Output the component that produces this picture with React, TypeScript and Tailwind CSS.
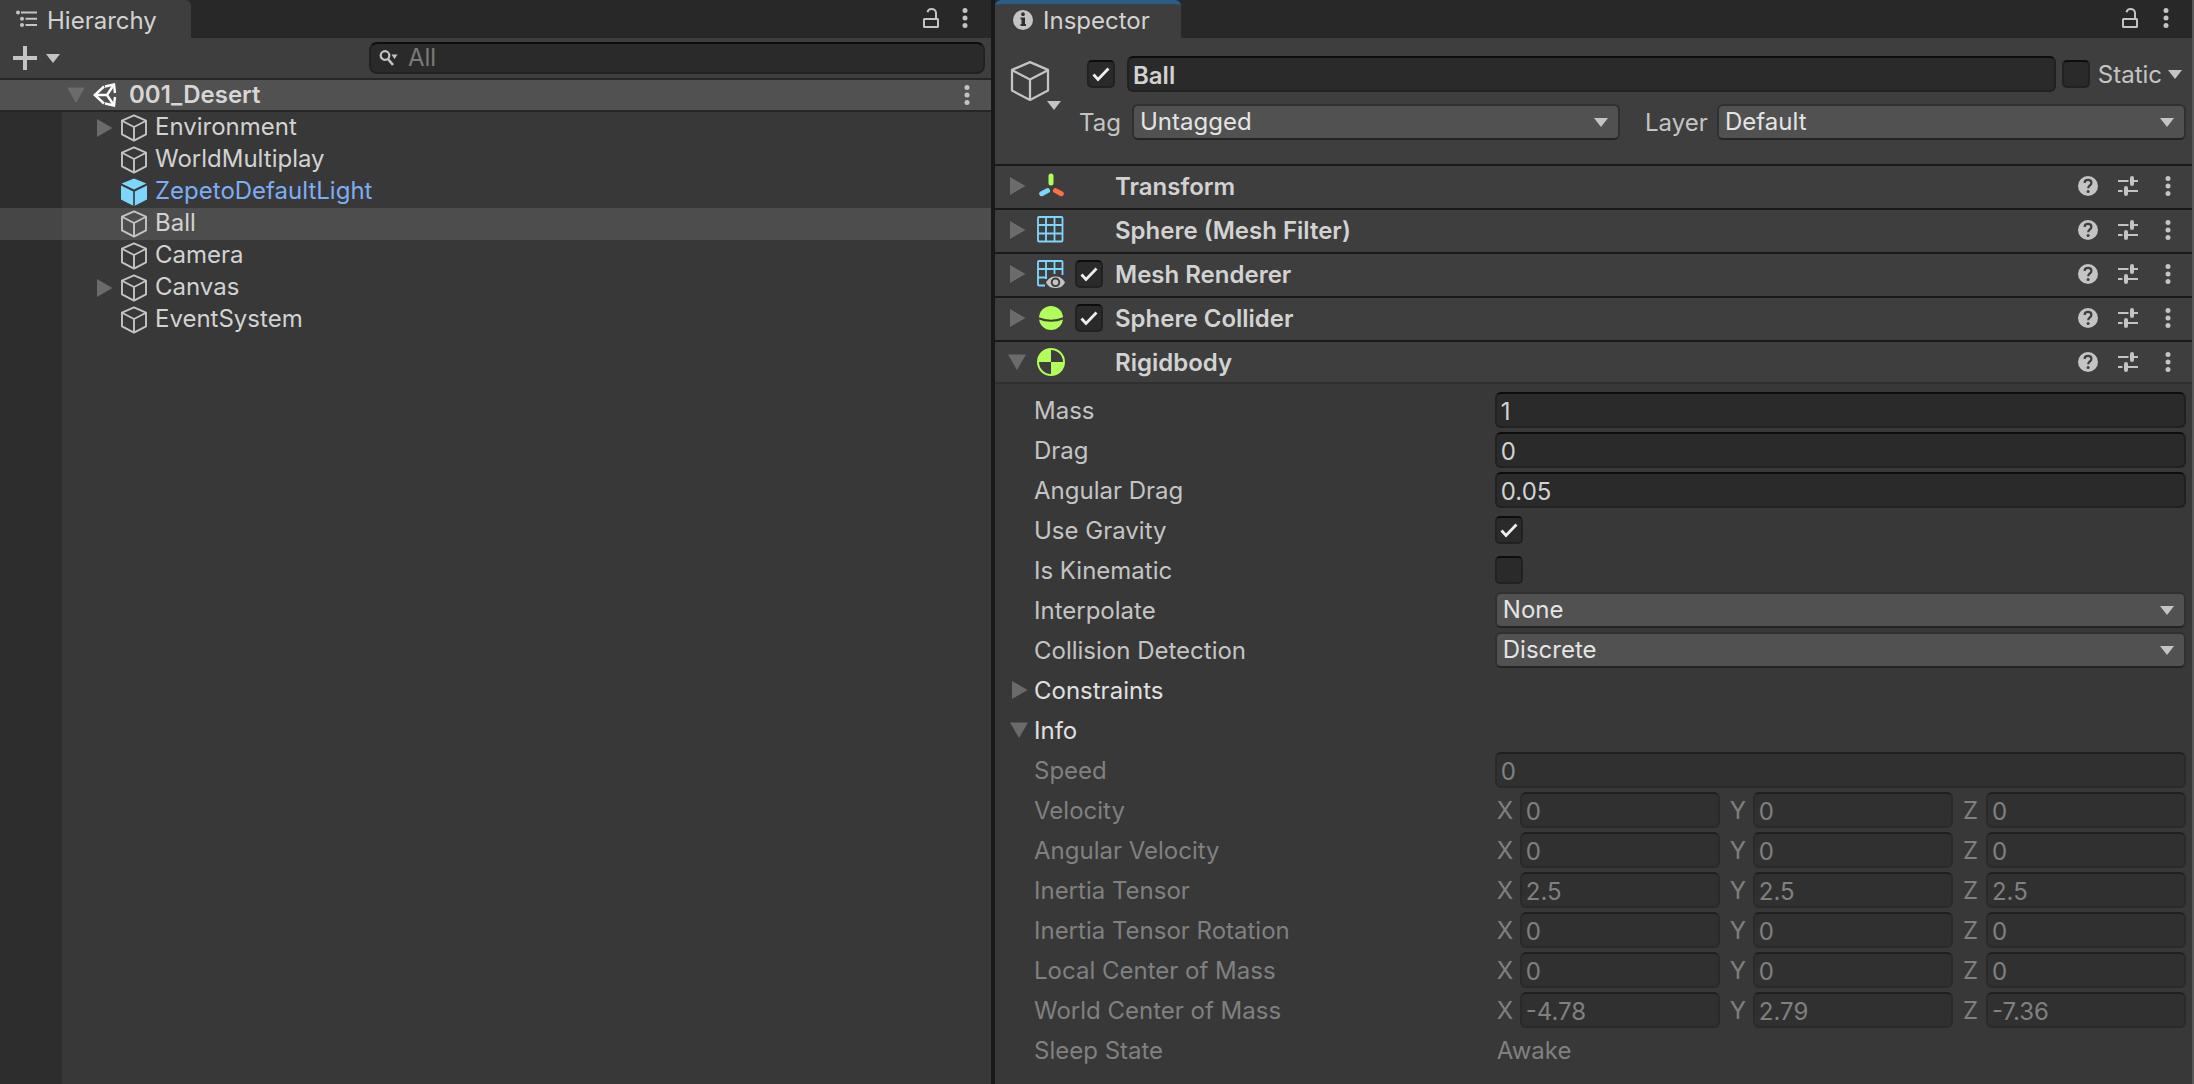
import type { ReactNode } from "react";

const Cube = ({ className = "w-7 h-7", strokeWidth = 1.9 }: { className?: string; strokeWidth?: number }) => (
  <svg viewBox="0 0 28 28" className={className} fill="none" stroke="#c4c4c4" strokeWidth={strokeWidth} strokeLinejoin="round" strokeLinecap="round">
    <path d="M14 1.4 26 6.6V20.4L14 26.6 2 20.4V6.6Z" />
    <path d="M2.4 7 14 13 25.6 7M14 13V26" />
  </svg>
);

const PrefabCube = () => (
  <svg viewBox="0 0 28 28" className="h-7 w-7" fill="#7fd6fd">
    <path d="M14 .4 26.4 5.6 14 11.6 1.6 5.6Z" />
    <path d="M1 7.6 13.2 13.4V27.8L1 21.6Z" />
    <path d="M27 7.6 14.8 13.4V27.8L27 21.6Z" />
  </svg>
);

const Foldout = ({ open = false }: { open?: boolean }) => (
  <svg viewBox="0 0 18 18" className="h-[18px] w-[18px] shrink-0" fill="#6b6b6b">
    {open ? <path d="M0 1.5H18L9 17Z" /> : <path d="M2 0V18L17.5 9Z" />}
  </svg>
);

const Caret = ({ className = "" }: { className?: string }) => (
  <svg viewBox="0 0 14 9" className={`h-[9px] w-3.5 shrink-0 ${className}`} fill="#c4c4c4">
    <path d="M0 0H14L7 9Z" />
  </svg>
);

const Dots = () => (
  <svg viewBox="0 0 20 20" className="h-5 w-5" fill="#c4c4c4">
    <circle cx="10" cy="2.5" r="2.5" />
    <circle cx="10" cy="10" r="2.5" />
    <circle cx="10" cy="17.5" r="2.5" />
  </svg>
);

const Lock = () => (
  <svg viewBox="0 0 20 20" className="h-5 w-5" fill="none" stroke="#c4c4c4" strokeWidth="2">
    <rect x="3" y="11" width="14" height="8" rx=".5" />
    <path d="M6.5 4.2C7 2 8.3 1 10.5 1 13 1 15 2.6 15 5V11" />
  </svg>
);

const Help = () => (
  <svg viewBox="0 0 20 20" className="h-5 w-5">
    <circle cx="10" cy="10" r="10" fill="#c4c4c4" />
    <path d="M6.6 7C6.6 5 8 3.9 10 3.9 12 3.9 13.4 5.1 13.4 6.9 13.4 9.3 10.2 9.4 10.2 12.3" fill="none" stroke="#3e3e3e" strokeWidth="2.2" />
    <circle cx="10.1" cy="15.6" r="1.5" fill="#3e3e3e" />
  </svg>
);

const Preset = () => (
  <svg viewBox="0 0 20 20" className="h-5 w-5" stroke="#c4c4c4" strokeWidth="2" fill="none">
    <path d="M0 5H10.5M14 5H20M0 15H4.5M8 15H20" />
    <path d="M14 2V8M8 12V18" strokeWidth="4" strokeLinecap="round" />
  </svg>
);

const TransformIcon = () => (
  <svg viewBox="0 0 28 28" className="h-7 w-7" fill="none" strokeWidth="5" strokeLinecap="round">
    <path d="M14 4V11" stroke="#b1fd59" />
    <path d="M10.5 18.6 4.7 21.7" stroke="#7fd6fd" />
    <path d="M18.5 18.6 24.3 21.7" stroke="#ff7043" />
  </svg>
);

const MeshIcon = () => (
  <svg viewBox="0 0 28 28" className="h-7 w-7" fill="none" stroke="#7fd6fd" strokeWidth="1.8">
    <rect x="1" y="1" width="24.5" height="24.5" rx="1" />
    <path d="M9 1V25M17.5 1V25M1 9H25M1 17.5H25" />
  </svg>
);

const RendererIcon = () => (
  <svg viewBox="0 0 28 28" className="h-7 w-7" fill="none" stroke="#7fd6fd" strokeWidth="1.8">
    <path d="M8 25.5H2Q1 25.5 1 24.5V2Q1 1 2 1H24.5Q25.5 1 25.5 2V15" />
    <path d="M9 1V19M17.5 1V14M1 9H25M1 17.5H10" />
    <path d="M9 22.5C12 17.5 15 16.5 18.5 16.5S25 17.5 28 22.5C25 27.5 22 28 18.5 28S12 27.5 9 22.5Z" fill="#c4c4c4" stroke="none" />
    <circle cx="18.5" cy="22.3" r="3.8" fill="#c4c4c4" stroke="#3e3e3e" strokeWidth="2" />
  </svg>
);

const ColliderIcon = () => (
  <svg viewBox="0 0 28 28" className="h-7 w-7">
    <circle cx="14" cy="14" r="12" fill="#b1fd59" />
    <path d="M1.5 14.2Q14 19.2 26.5 14.2" fill="none" stroke="#3e3e3e" strokeWidth="2" />
  </svg>
);

const RigidbodyIcon = () => (
  <svg viewBox="0 0 28 28" className="h-7 w-7">
    <circle cx="14" cy="14" r="13" fill="none" stroke="#b1fd59" strokeWidth="2" />
    <path d="M14 14V1A13 13 0 0 0 1 14ZM14 14V27A13 13 0 0 0 27 14Z" fill="#b1fd59" />
  </svg>
);

const UnityLogo = () => (
  <svg viewBox="0 0 24 24" className="h-6 w-6" fill="none" stroke="#fff" strokeWidth="2.4">
    <path d="M11 3.5 1.8 12 11 20.5M1.8 12H14M14 12 21 1.5M14 12 21 22.5" />
    <path d="M12 3.5 21 1.5 22 10M12 20.5 21 22.5 22 14" />
  </svg>
);

const IconButton = ({ label, children }: { label: string; children: ReactNode }) => (
  <button type="button" aria-label={label} className="shrink-0">
    {children}
  </button>
);

const Check = ({ id, label, checked = false }: { id?: string; label?: string; checked?: boolean }) => (
  <span className="grid h-7 w-7 shrink-0">
    <input
      type="checkbox"
      id={id}
      aria-label={label}
      defaultChecked={checked}
      className="peer col-start-1 row-start-1 h-7 w-7 appearance-none rounded-[5px] border-2 border-[#212121] border-t-[#0d0d0d] bg-[#2a2a2a]"
    />
    <svg viewBox="0 0 28 28" className="pointer-events-none col-start-1 row-start-1 hidden h-7 w-7 peer-checked:block" fill="none" stroke="#eee" strokeWidth="2.8">
      <path d="M6.5 14.5 11 19.5 21.5 8.5" />
    </svg>
  </span>
);

const Field = ({ id, label, value, bold = false, disabled = false }: { id?: string; label?: string; value: string; bold?: boolean; disabled?: boolean }) => (
  <input
    type="text"
    id={id}
    aria-label={label}
    defaultValue={value}
    disabled={disabled}
    className={`h-9 w-full min-w-0 flex-1 rounded-md border-2 border-[#212121] border-t-[#0d0d0d] bg-[#2a2a2a] px-1 pt-0.5 text-[#d2d2d2] disabled:border-[#2a2a2a] disabled:border-t-[#1f1f1f] disabled:bg-[#303030] disabled:text-[#808080] ${bold ? "font-semibold" : ""}`}
  />
);

const Dropdown = ({ id, value, options }: { id: string; value: string; options: string[] }) => (
  <span className="grid min-w-0 flex-1 items-center">
    <select
      id={id}
      defaultValue={value}
      className="col-start-1 row-start-1 h-9 w-full appearance-none rounded-md border-2 border-[#303030] border-b-[#242424] bg-[#515151] px-1.5 pb-0.5 text-[#e4e4e4]"
    >
      {options.map((o) => (
        <option key={o}>{o}</option>
      ))}
    </select>
    <Caret className="pointer-events-none col-start-1 row-start-1 mr-3 justify-self-end" />
  </span>
);

/* one line of the component body: label on the left, control on the right */
const Row = ({ label, htmlFor, dim = false, children }: { label: string; htmlFor?: string; dim?: boolean; children: ReactNode }) => (
  <div className={`flex h-9 items-center pr-1.5 pl-[39px] ${dim ? "text-[#808080]" : "text-[#c4c4c4]"}`}>
    {htmlFor ? (
      <label htmlFor={htmlFor} className="w-2/5 shrink-0 pt-0.5">{label}</label>
    ) : (
      <span className="w-2/5 shrink-0 pt-0.5">{label}</span>
    )}
    {children}
  </div>
);

const FoldRow = ({ label, open = false }: { label: string; open?: boolean }) => (
  <button type="button" aria-expanded={open} className="flex h-9 items-center gap-1.5 pl-[15px] text-[#e0e0e0]">
    <Foldout open={open} />
    <span className="pt-0.5">{label}</span>
  </button>
);

const vectors = [
  { label: "Velocity", values: ["0", "0", "0"] },
  { label: "Angular Velocity", values: ["0", "0", "0"] },
  { label: "Inertia Tensor", values: ["2.5", "2.5", "2.5"] },
  { label: "Inertia Tensor Rotation", values: ["0", "0", "0"] },
  { label: "Local Center of Mass", values: ["0", "0", "0"] },
  { label: "World Center of Mass", values: ["-4.78", "2.79", "-7.36"] },
];

const VectorRow = ({ label, values }: { label: string; values: string[] }) => (
  <Row label={label} dim>
    <div className="flex flex-1 gap-2.5 pl-0.5">
      {["X", "Y", "Z"].map((axis, i) => (
        <label key={axis} className="flex min-w-0 flex-1 items-center">
          <span className="w-[23px] shrink-0 pt-0.5">{axis}</span>
          <Field value={values[i]} label={`${label} ${axis}`} disabled />
        </label>
      ))}
    </div>
  </Row>
);

const components = [
  { name: "Transform", icon: <TransformIcon /> },
  { name: "Sphere (Mesh Filter)", icon: <MeshIcon /> },
  { name: "Mesh Renderer", icon: <RendererIcon />, toggle: true },
  { name: "Sphere Collider", icon: <ColliderIcon />, toggle: true },
  { name: "Rigidbody", icon: <RigidbodyIcon />, open: true },
];

const ComponentHeader = ({ name, icon, toggle, open }: { name: string; icon: ReactNode; toggle?: boolean; open?: boolean }) => (
  <div className={`flex h-11 items-center border-t-2 border-[#1a1a1a] bg-[#3e3e3e] pr-3.5 pb-0.5 pl-[13px] ${open ? "shadow-[inset_0_-2px_0_#303030]" : ""}`}>
    <button type="button" aria-label={`Toggle ${name}`} aria-expanded={!!open}>
      <Foldout open={open} />
    </button>
    <span className="ml-[11px]">{icon}</span>
    <span className="ml-2.5 w-10">{toggle && <Check label={`Enable ${name}`} checked />}</span>
    <h2 className="pt-0.5 font-semibold text-[#d2d2d2]">{name}</h2>
    <div className="ml-auto flex gap-5">
      <IconButton label="Help"><Help /></IconButton>
      <IconButton label="Presets"><Preset /></IconButton>
      <IconButton label="More"><Dots /></IconButton>
    </div>
  </div>
);

const objects = [
  { name: "Environment", children: true },
  { name: "WorldMultiplay" },
  { name: "ZepetoDefaultLight", prefab: true },
  { name: "Ball", selected: true },
  { name: "Camera" },
  { name: "Canvas", children: true },
  { name: "EventSystem" },
];

const Hierarchy = () => (
  <section className="flex min-w-0 flex-[991] flex-col bg-[#383838]">
    <div className="flex h-[38px] items-stretch bg-[#282828]">
      <button type="button" className="flex w-[191px] items-center gap-[9px] rounded-tr-md bg-[#3e3e3e] pl-4 text-[#d2d2d2]">
        <svg viewBox="0 0 22 18" className="h-[18px] w-[22px]" fill="#c4c4c4">
          <circle cx="2" cy="2.5" r="2" />
          <circle cx="6" cy="8.8" r="2" />
          <circle cx="6" cy="15" r="2" />
          <path d="M5 1.5H21V3.5H5ZM9.5 7.8H21V9.8H9.5ZM9.5 14H21V16H9.5Z" />
        </svg>
        <span className="pt-1">Hierarchy</span>
      </button>
      <div className="ml-auto flex items-center gap-3.5 pr-4 pb-0.5">
        <IconButton label="Lock"><Lock /></IconButton>
        <IconButton label="Menu"><Dots /></IconButton>
      </div>
    </div>

    {/* toolbar */}
    <div className="flex h-10 items-center bg-[#3e3e3e] pr-1.5 pl-[13px]">
      <button type="button" aria-label="Create" className="flex items-center gap-[9px]">
        <svg viewBox="0 0 24 24" className="h-6 w-6" stroke="#c4c4c4" strokeWidth="4">
          <path d="M12 0V24M0 12H24" />
        </svg>
        <Caret />
      </button>
      <label className="ml-[309px] flex h-8 flex-1 items-center gap-[9px] rounded-lg border-2 border-[#212121] border-t-[#0d0d0d] bg-[#2a2a2a] pl-2">
        <svg viewBox="0 0 20 18" className="h-[18px] w-5 shrink-0" fill="none" stroke="#c4c4c4" strokeWidth="2.2">
          <circle cx="6" cy="6.5" r="4.3" />
          <path d="M9 10 14 16" strokeWidth="2.6" />
          <path d="M12.5 5.5H18.5L15.5 10Z" fill="#c4c4c4" stroke="none" />
        </svg>
        <input type="text" aria-label="Search" placeholder="All" className="min-w-0 flex-1 bg-transparent leading-7 placeholder:text-[#7a7a7a]" />
      </label>
    </div>

    {/* scene header */}
    <div className="flex h-[34px] items-center border-y-2 border-[#262626] bg-[#515151] pr-3.5 pl-[67px]">
      <Foldout open />
      <span className="ml-2"><UnityLogo /></span>
      <span className="ml-3 font-semibold text-[#d6d6d6]">001_Desert</span>
      <span className="ml-auto flex">
        <IconButton label="Scene menu"><Dots /></IconButton>
      </span>
    </div>

    <ul className="flex-1 bg-linear-to-r from-[#2d2d2d] from-[62px] to-[#383838] to-[62px]">
      {objects.map((o) => (
        <li key={o.name} className={`flex h-8 items-center pl-[95px] ${o.selected ? "bg-linear-to-r from-[#464646] from-[62px] to-[#4d4d4d] to-[62px]" : ""}`}>
          <span className="w-[25px]">{o.children && <Foldout />}</span>
          {o.prefab ? <PrefabCube /> : <Cube />}
          <span className={`ml-[7px] pb-0.5 ${o.prefab ? "text-[#7dadf3]" : "text-[#d2d2d2]"}`}>{o.name}</span>
        </li>
      ))}
    </ul>
  </section>
);

const Inspector = () => (
  <section className="min-w-0 flex-[1197] border-r-2 border-[#585858] bg-[#383838]">
    <div className="flex h-[38px] items-stretch bg-[#282828]">
      <button type="button" className="flex w-[186px] items-center gap-2.5 rounded-t-md border-t-4 border-[#2c5d87] bg-[#3e3e3e] pb-0.5 pl-[18px] text-[#d2d2d2]">
        <svg viewBox="0 0 20 20" className="h-5 w-5">
          <circle cx="10" cy="10" r="10" fill="#c4c4c4" />
          <path d="M10 2.3A1.9 1.9 0 1 1 9.99 2.3ZM7.5 7.5H12V14H13V16H7.5V14H8.5V9.5H7.5Z" fill="#303030" />
        </svg>
        <span className="pt-0.5">Inspector</span>
      </button>
      <div className="ml-auto flex items-center gap-4 pr-4 pb-0.5">
        <IconButton label="Lock"><Lock /></IconButton>
        <IconButton label="Menu"><Dots /></IconButton>
      </div>
    </div>

    {/* object header */}
    <div className="flex h-[126px] bg-[#3e3e3e] pt-[18px] pr-1.5 pl-3.5 text-[#c4c4c4]">
      <button type="button" aria-label="Change icon" className="flex h-[54px] w-[54px] shrink-0 items-end pt-1">
        <Cube className="-mr-1 h-[42px] w-[42px] shrink-0 self-start" strokeWidth={1.5} />
        <Caret />
      </button>
      <div className="flex min-w-0 flex-1 flex-col gap-3">
        <div className="flex items-center pl-6">
          <Check label="Active" checked />
          <span className="ml-3 flex min-w-0 flex-1"><Field label="Name" value="Ball" bold /></span>
          <span className="ml-1.5 flex"><Check id="static" /></span>
          <label htmlFor="static" className="ml-2 pt-0.5">Static</label>
          <button type="button" aria-label="Static flags" className="mr-1 ml-1.5"><Caret /></button>
        </div>
        <div className="flex items-center pl-4">
          <label htmlFor="tag" className="w-[53px] pt-0.5">Tag</label>
          <div className="flex min-w-0 flex-[488]">
            <Dropdown id="tag" value="Untagged" options={["Untagged", "Respawn", "Finish", "Player"]} />
          </div>
          <label htmlFor="layer" className="ml-[25px] w-[72px] pt-0.5">Layer</label>
          <div className="flex min-w-0 flex-[469]">
            <Dropdown id="layer" value="Default" options={["Default", "TransparentFX", "Water", "UI"]} />
          </div>
        </div>
      </div>
    </div>

    {components.map((c) => (
      <ComponentHeader key={c.name} {...c} />
    ))}

    {/* rigidbody properties */}
    <div className="flex flex-col gap-1 py-2">
      <Row label="Mass" htmlFor="mass"><Field id="mass" value="1" /></Row>
      <Row label="Drag" htmlFor="drag"><Field id="drag" value="0" /></Row>
      <Row label="Angular Drag" htmlFor="angular-drag"><Field id="angular-drag" value="0.05" /></Row>
      <Row label="Use Gravity" htmlFor="gravity"><Check id="gravity" checked /></Row>
      <Row label="Is Kinematic" htmlFor="kinematic"><Check id="kinematic" /></Row>
      <Row label="Interpolate" htmlFor="interpolate">
        <Dropdown id="interpolate" value="None" options={["None", "Interpolate", "Extrapolate"]} />
      </Row>
      <Row label="Collision Detection" htmlFor="collision">
        <Dropdown id="collision" value="Discrete" options={["Discrete", "Continuous", "Continuous Dynamic"]} />
      </Row>
      <FoldRow label="Constraints" />
      <FoldRow label="Info" open />
      <Row label="Speed" htmlFor="speed" dim><Field id="speed" value="0" disabled /></Row>
      {vectors.map((v) => (
        <VectorRow key={v.label} {...v} />
      ))}
      <Row label="Sleep State" dim><span className="pt-0.5 pl-0.5">Awake</span></Row>
    </div>
  </section>
);

export default function App() {
  return (
    <main className="flex min-h-screen gap-1 bg-[#191919] font-['Inter','Liberation_Sans',sans-serif] text-2xl leading-8">
      <Hierarchy />
      <Inspector />
    </main>
  );
}
